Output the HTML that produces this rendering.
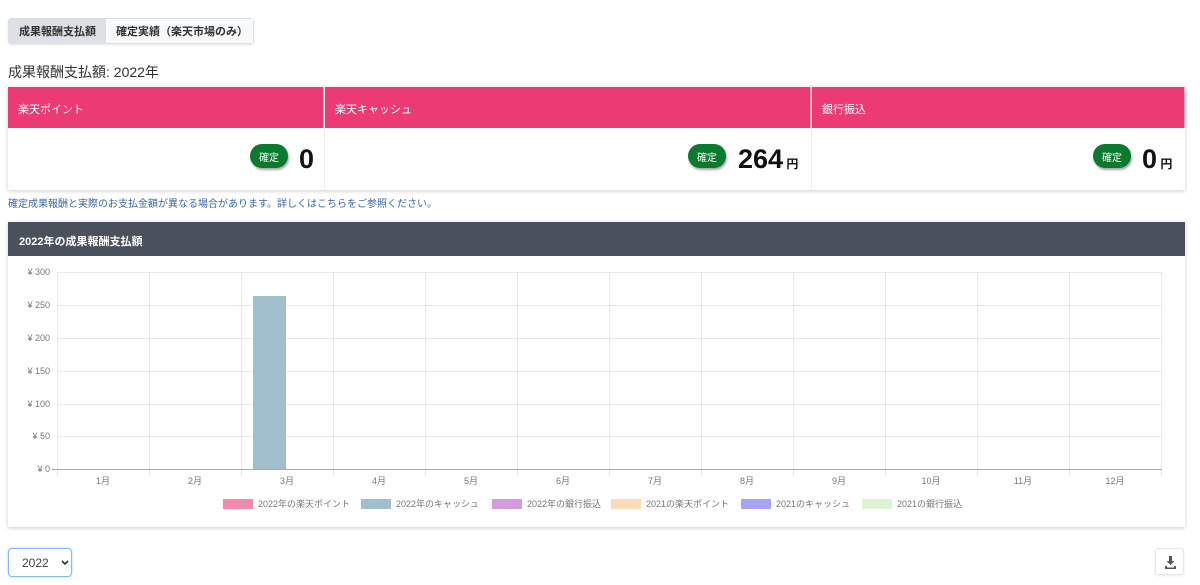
<!DOCTYPE html>
<html><head><meta charset="utf-8"><style>
*{box-sizing:border-box;margin:0;padding:0}
body{width:1200px;height:585px;background:#fff;font-family:"Liberation Sans","Noto Sans CJK JP",sans-serif;position:relative;overflow:hidden;color:#333}
.abs{position:absolute}
.tabs{left:8px;top:18px;width:246px;height:26px;border:1px solid #dde0e4;border-radius:3px;display:flex;font-size:11px;font-weight:bold;box-shadow:0 1px 2px rgba(0,0,0,.1)}
.tabs div{display:flex;align-items:center;padding:0 10px}
.card{left:8px;top:87px;width:1177px;height:103px;box-shadow:0 1px 4px rgba(0,0,0,.2);display:flex}
.col{border-right:1px solid #eee;position:relative}
.col .h{height:41px;background:#ec3b74;color:#fff;font-size:11px;padding:14px 10px;border-right:1px solid #f6a0bd}
.badge{position:absolute;top:57px;background:#0a7a2e;color:#fff;font-size:10px;border-radius:12px;width:38px;height:24px;display:flex;align-items:center;justify-content:center;box-shadow:1px 2px 2px rgba(0,0,0,.35)}
.num{position:absolute;top:56px;font-size:27px;font-weight:bold;color:#111;line-height:32px}
.num small{font-size:12px}
.chart{left:8px;top:222px;width:1177px;height:305px;box-shadow:0 1px 4px rgba(0,0,0,.2)}
.ch{height:34px;background:#4a505c;color:#fff;font-size:11px;font-weight:bold;padding:11px 11px}
</style></head><body>
<div class="abs tabs"><div style="background:#dde0e4">成果報酬支払額</div><div style="background:#f8f9fa;flex:1">確定実績（楽天市場のみ）</div></div>
<div class="abs" style="left:8px;top:62px;font-size:14px;color:#333">成果報酬支払額: 2022年</div>
<div class="abs card">
 <div class="col" style="width:317px"><div class="h">楽天ポイント</div><div class="badge" style="left:242px">確定</div><div class="num" style="left:291px">0</div></div>
 <div class="col" style="width:487px"><div class="h">楽天キャッシュ</div><div class="badge" style="left:363px">確定</div><div class="num" style="left:413px">264<small> 円</small></div></div>
 <div class="col" style="width:373px;border-right:none"><div class="h">銀行振込</div><div class="badge" style="left:281px">確定</div><div class="num" style="left:330px">0<small> 円</small></div></div>
</div>
<div class="abs" style="left:8px;top:195px;font-size:10px;color:#3a66a8">確定成果報酬と実際のお支払金額が異なる場合があります。詳しくはこちらをご参照ください。</div>
<div class="abs chart"><div class="ch">2022年の成果報酬支払額</div></div>
<svg class="abs" style="left:0;top:0" width="1200" height="585" font-family="Liberation Sans,Noto Sans CJK JP,sans-serif">
<g stroke="#e8e8e8" stroke-width="1">
<line x1="57" y1="272.5" x2="1162" y2="272.5"/><line x1="57" y1="305.5" x2="1162" y2="305.5"/><line x1="57" y1="338.5" x2="1162" y2="338.5"/><line x1="57" y1="371.5" x2="1162" y2="371.5"/><line x1="57" y1="404.5" x2="1162" y2="404.5"/><line x1="57" y1="436.5" x2="1162" y2="436.5"/>
<line x1="57.5" y1="272" x2="57.5" y2="476"/><line x1="149.5" y1="272" x2="149.5" y2="476"/><line x1="241.5" y1="272" x2="241.5" y2="476"/><line x1="333.5" y1="272" x2="333.5" y2="476"/><line x1="425.5" y1="272" x2="425.5" y2="476"/><line x1="517.5" y1="272" x2="517.5" y2="476"/><line x1="609.5" y1="272" x2="609.5" y2="476"/><line x1="701.5" y1="272" x2="701.5" y2="476"/><line x1="793.5" y1="272" x2="793.5" y2="476"/><line x1="885.5" y1="272" x2="885.5" y2="476"/><line x1="977.5" y1="272" x2="977.5" y2="476"/><line x1="1069.5" y1="272" x2="1069.5" y2="476"/><line x1="1161.5" y1="272" x2="1161.5" y2="476"/>
</g>
<line x1="52" y1="469.5" x2="1162" y2="469.5" stroke="#aaa"/>
<rect x="253" y="296" width="33" height="173" fill="#a1bfcd"/>
<g font-size="9" fill="#777" text-anchor="end">
<text x="50" y="275">¥ 300</text><text x="50" y="308">¥ 250</text><text x="50" y="341">¥ 200</text><text x="50" y="374">¥ 150</text><text x="50" y="407">¥ 100</text><text x="50" y="439">¥ 50</text><text x="50" y="472">¥ 0</text></g>
<g font-size="9" fill="#777" text-anchor="middle">
<text x="103" y="484">1月</text><text x="195" y="484">2月</text><text x="287" y="484">3月</text><text x="379" y="484">4月</text><text x="471" y="484">5月</text><text x="563" y="484">6月</text><text x="655" y="484">7月</text><text x="747" y="484">8月</text><text x="839" y="484">9月</text><text x="931" y="484">10月</text><text x="1023" y="484">11月</text><text x="1115" y="484">12月</text></g>
<g font-size="9" fill="#777">
<rect x="223" y="499" width="30" height="10" fill="#f08aa9"/><text x="258" y="507">2022年の楽天ポイント</text>
<rect x="361" y="499" width="30" height="10" fill="#a1bfcd"/><text x="396" y="507">2022年のキャッシュ</text>
<rect x="492" y="499" width="30" height="10" fill="#d59be0"/><text x="527" y="507">2022年の銀行振込</text>
<rect x="611" y="499" width="30" height="10" fill="#fcdcb8"/><text x="646" y="507">2021の楽天ポイント</text>
<rect x="741" y="499" width="30" height="10" fill="#a8a4f5"/><text x="776" y="507">2021のキャッシュ</text>
<rect x="862" y="499" width="30" height="10" fill="#def3d6"/><text x="897" y="507">2021の銀行振込</text></g>
</svg>
<div class="abs" style="left:8px;top:548px;width:64px;height:29px;border:1px solid #8ab8f0;border-radius:4px;box-shadow:0 0 2px #a8ccf5;font-size:12px;color:#444;padding:7px 0 0 13px">2022
<svg style="position:absolute;left:52px;top:11px" width="8" height="6"><path d="M1 1l3 3 3-3" stroke="#333" stroke-width="1.6" fill="none"/></svg></div>
<div class="abs" style="left:1155px;top:548px;width:29px;height:27px;border:1px solid #e6e6e6;border-radius:3px;box-shadow:0 1px 2px rgba(0,0,0,.08)">
<svg width="29" height="27"><path d="M13 7h3v5h2.5l-4 4-4-4H13z M9 17h2v1.5h7V17h2v3H9z" fill="#555"/></svg></div>
</body></html>
